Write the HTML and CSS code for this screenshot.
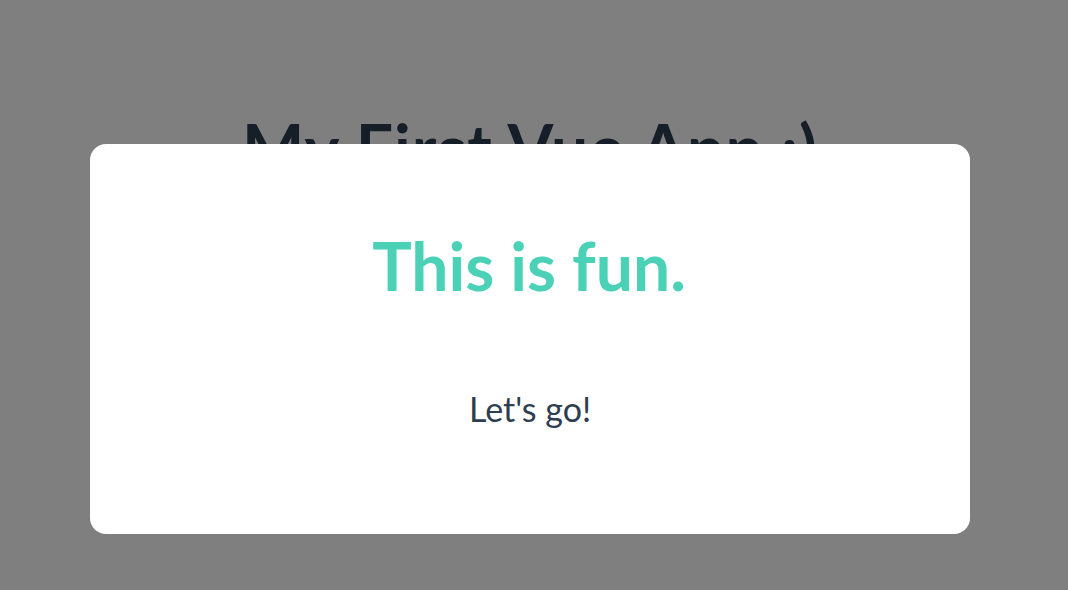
FILE: index.html
```html
<!DOCTYPE html>
<html>
<head>
<meta charset="utf-8">
<link rel="stylesheet" href="styles.css">
</head>
<body>
<div class="app">
  <h1 class="title">My First Vue App :)</h1>
</div>
<div class="backdrop">
  <div class="modal">
    <h1 class="modal-heading">This is fun.</h1>
    <p class="modal-text">Let's go!</p>
  </div>
</div>
</body>
</html>
```
FILE: styles.css
```css
html, body {
  margin: 0;
  padding: 0;
  background: #ffffff;
  font-family: Lato, "Noto Sans", sans-serif;
  color: #2c3e50;
}
.app {
  width: 1060px;
  text-align: center;
  padding-top: 108px;
}
.title {
  margin: 0;
  font-size: 66px;
  font-weight: 700;
  line-height: 1.2;
  letter-spacing: 1px;
}
.backdrop {
  position: fixed;
  inset: 0;
  background: rgba(0, 0, 0, 0.5);
  display: flex;
  align-items: flex-start;
  padding: 144px 0 0 90px;
}
.modal {
  width: 880px;
  height: 390px;
  box-sizing: border-box;
  background: #ffffff;
  border-radius: 16px;
  display: flex;
  flex-direction: column;
  align-items: center;
  padding-top: 82px;
}
.modal-heading {
  margin: 0;
  color: #4bd1b5;
  font-size: 66px;
  font-weight: 700;
  line-height: 80px;
  padding-right: 2px;
}
.modal-text {
  margin: 83px 0 0;
  font-size: 34px;
  font-weight: 400;
  line-height: 40px;
}
```
